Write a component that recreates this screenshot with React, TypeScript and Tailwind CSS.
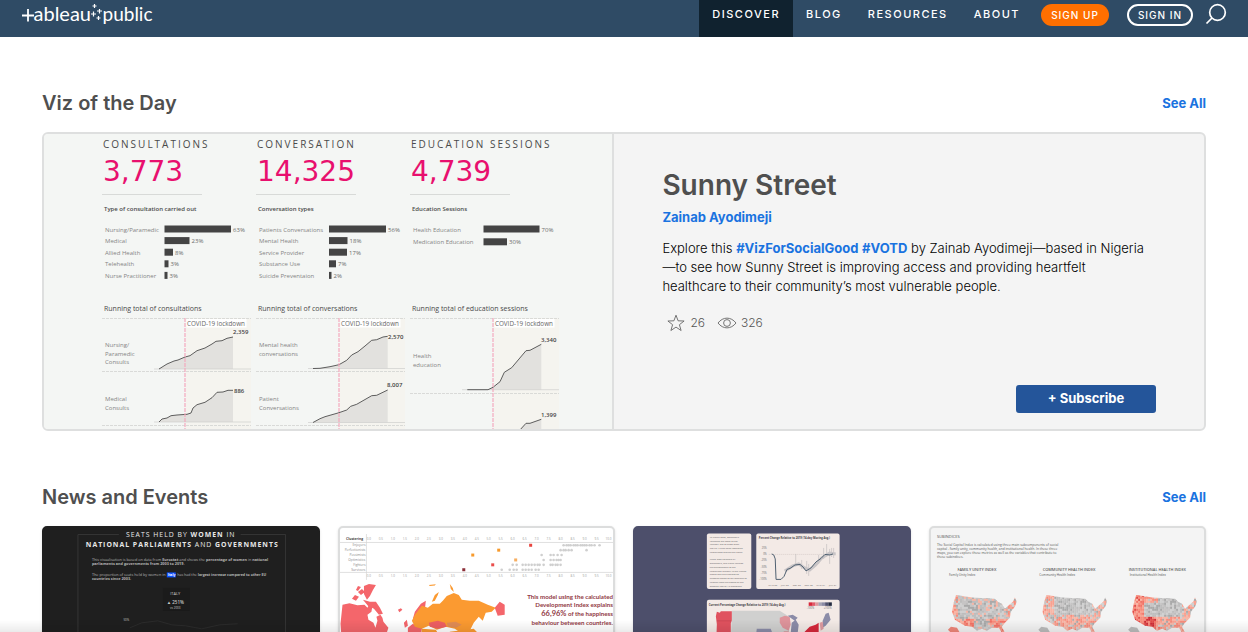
import { ReactNode } from "react";

type Point = [number, number];

interface IBar {
  label: string;
  percent: number;
  width: number;
}

interface IRunning {
  labels: string[];
  labelY: number;
  points: Point[];
  base: number;
  total: string;
  totalX: number;
  totalY: number;
}

interface IColumn {
  title: string;
  total: string;
  barsTitle: string;
  barX: number;
  barStep: number;
  bars: IBar[];
  runningTitle: string;
  separators: number[];
  running: IRunning[];
}

const columns: IColumn[] = [
  {
    title: "CONSULTATIONS",
    total: "3,773",
    barsTitle: "Type of consultation carried out",
    barX: 62.5,
    barStep: 11.6,
    bars: [
      { label: "Nursing/Paramedic", percent: 63, width: 66.5 },
      { label: "Medical", percent: 23, width: 25 },
      { label: "Allied Health", percent: 8, width: 8.5 },
      { label: "Telehealth", percent: 3, width: 4 },
      { label: "Nurse Practitioner", percent: 3, width: 3 },
    ],
    runningTitle: "Running total of consultations",
    separators: [4, 57, 111],
    running: [
      {
        labels: ["Nursing/", "Paramedic", "Consults"],
        labelY: 33,
        points: [[57, 55], [65, 50], [72, 47], [76, 46], [83, 43], [88, 41.7], [95, 36.7], [103, 34], [110, 30], [114, 27.3], [120, 26.7], [125, 24.3], [131, 23]],
        base: 55,
        total: "2,359",
        totalX: 131,
        totalY: 20,
      },
      {
        labels: ["Medical", "Consults"],
        labelY: 87,
        points: [[57, 108], [60, 105], [65, 104], [69, 101.7], [75, 101], [85, 100.3], [89, 99], [91, 94], [95, 90.7], [103, 88.3], [110, 83.7], [115, 78.3], [121, 78], [126, 76.3], [131, 76.3]],
        base: 108,
        total: "886",
        totalX: 132,
        totalY: 79,
      },
    ],
  },
  {
    title: "CONVERSATION",
    total: "14,325",
    barsTitle: "Conversation types",
    barX: 73,
    barStep: 11.6,
    bars: [
      { label: "Patients Conversations", percent: 56, width: 57 },
      { label: "Mental Health", percent: 18, width: 18.5 },
      { label: "Service Provider", percent: 17, width: 18 },
      { label: "Substance Use", percent: 7, width: 7 },
      { label: "Suicide Preventaion", percent: 2, width: 2.5 },
    ],
    runningTitle: "Running total of conversations",
    separators: [4, 57, 111],
    running: [
      {
        labels: ["Mental health", "conversations"],
        labelY: 33,
        points: [[57, 54.5], [64, 54.3], [74, 52.7], [83, 50.7], [90.7, 46.3], [95.7, 41], [102, 37.7], [109, 32], [115.7, 26.3], [120.7, 25.7], [127, 23], [131.7, 22.3]],
        base: 54.5,
        total: "2,570",
        totalX: 132,
        totalY: 25,
      },
      {
        labels: ["Patient", "Conversations"],
        labelY: 87,
        points: [[57, 108.5], [64, 104.7], [69, 102.7], [83, 98.7], [90.7, 96], [94.7, 92.3], [100.7, 90.3], [115.7, 81.7], [120.7, 81.3], [131.7, 76]],
        base: 108.5,
        total: "8,007",
        totalX: 131,
        totalY: 73,
      },
    ],
  },
  {
    title: "EDUCATION SESSIONS",
    total: "4,739",
    barsTitle: "Education Sessions",
    barX: 73.5,
    barStep: 12.8,
    bars: [
      { label: "Health Education", percent: 70, width: 56 },
      { label: "Medication Education", percent: 30, width: 23.5 },
    ],
    runningTitle: "Running total of education sessions",
    separators: [4, 79],
    running: [
      {
        labels: ["Health", "education"],
        labelY: 44,
        points: [[57.3, 75.7], [78, 75.7], [83, 73.3], [90, 67.7], [94.3, 58.3], [101.7, 53.7], [116, 36.7], [120, 36.3], [131.3, 30.3]],
        base: 75.7,
        total: "3,340",
        totalX: 131,
        totalY: 28,
      },
      {
        labels: ["Medication"],
        labelY: 119,
        points: [[109, 117], [116, 109.3], [120, 109.3], [131.3, 105.3]],
        base: 151,
        total: "1,399",
        totalX: 131,
        totalY: 103,
      },
    ],
  },
];

function Logo() {
  return (
    <svg width="134" height="30" viewBox="0 0 134 30" role="img" aria-label="tableau public" className="shrink-0">
      <g stroke="#fff" fill="none">
        <path d="M0 15.500h12M6 9v12.500" strokeWidth="1.800" />
        <path d="M70.500 6h4M72.500 4v4M75 11h5M77.500 9v4.500M69 14h5M71.500 11.500v5M74.500 18h4M76.500 16v4" strokeWidth="1.200" />
      </g>
      <g fill="#fff" fontFamily="Lato, sans-serif">
        <text x="11.500" y="21" fontSize="20">ableau</text>
        <text x="80.500" y="21" fontSize="19">public</text>
      </g>
    </svg>
  );
}

function NavLink({ children, active }: { children: ReactNode; active?: boolean }) {
  return (
    <a
      href="#"
      className={
        active
          ? "h-full bg-[#10222f] px-[13px] pt-[6px] leading-4"
          : "h-full px-[13px] pt-[6px] leading-4"
      }
    >
      {children}
    </a>
  );
}

function Header() {
  return (
    <header className="flex h-[37px] justify-between bg-[#2f4b65] pr-[21px] pl-[22px] text-white">
      <a href="#">
        <Logo />
      </a>
      <div className="flex">
        <nav className="flex text-[11px] font-medium tracking-[1.5px]">
          <NavLink active>DISCOVER</NavLink>
          <NavLink>BLOG</NavLink>
          <NavLink>RESOURCES</NavLink>
          <NavLink>ABOUT</NavLink>
        </nav>
        <div className="ml-2 flex items-start gap-[18px] pt-1 text-[10px] font-medium tracking-[1px]">
          <button type="button" className="h-[22px] w-[68px] rounded-full bg-[#ff6f00]">
            SIGN UP
          </button>
          <button type="button" className="h-[22px] w-[66px] rounded-full border-2 border-white">
            SIGN IN
          </button>
        </div>
        <button type="button" aria-label="Search" className="ml-3 h-7">
          <svg width="22" height="22" viewBox="0 0 22 22" fill="none" stroke="#fff" strokeWidth="1.700">
            <circle cx="12.500" cy="9.500" r="7.800" />
            <path d="M7 15l-5.500 5.500" />
          </svg>
        </button>
      </div>
    </header>
  );
}

function SectionHeading({ title }: { title: string }) {
  return (
    <div className="mb-[15px] flex items-center justify-between pt-[52px]">
      <h2 className="text-xl leading-7 font-semibold text-[#4f4f4f]">{title}</h2>
      <a href="#" className="pt-px text-[13px] font-bold text-[#1a73e0]">
        See All
      </a>
    </div>
  );
}

function BarChart({ column }: { column: IColumn }) {
  return (
    <svg width="154" height="80" viewBox="0 0 154 80" className="mt-1 block" fontSize="6">
      {column.bars.map((bar, i) => {
        const y = 11 + i * column.barStep;
        return (
          <g key={bar.label}>
            <text x="3" y={y + 2.5} fill="#858585">
              {bar.label}
            </text>
            <rect x={column.barX} y={y - 3.5} width={bar.width} height="7" fill="#444" />
            <text x={column.barX + bar.width + 2} y={y + 2.5} fill="#6b6b6b">
              {bar.percent}%
            </text>
          </g>
        );
      })}
    </svg>
  );
}

function RunningChart({ column }: { column: IColumn }) {
  return (
    <svg width="154" height="118" viewBox="0 0 154 118" className="block" fontSize="6">
      <rect x="84" y="4" width="65" height="114" fill="#f5f4ef" />
      {column.separators.map((y) => (
        <path key={y} d={`M0 ${y}.5H149`} stroke="#d2d3d1" strokeWidth="0.8" strokeDasharray="3 1" />
      ))}
      {column.running.map((item) => {
        const line = item.points.map((p) => p.join(" ")).join("L");
        return (
          <g key={item.total}>
            <path d={`M${line}V${item.base}H${item.points[0][0]}Z`} fill="#e2e1de" />
            <path d={`M52 ${item.base}H149`} stroke="#cfcfcd" strokeWidth="0.7" />
            <path d={`M${line}`} fill="none" stroke="#4d4d4d" strokeWidth="0.9" />
            <text x={item.totalX} y={item.totalY} fill="#3f3f3f" fontWeight="600">
              {item.total}
            </text>
            {item.labels.map((label, i) => (
              <text key={label} x="3" y={item.labelY + i * 8.7} fill="#858585">
                {label}
              </text>
            ))}
          </g>
        );
      })}
      <path d="M83 4v114" stroke="#f3a9bd" strokeWidth="1.200" strokeDasharray="4 1" />
      <rect x="84.500" y="5" width="60" height="8.500" fill="#fff" />
      <text x="85" y="11.500" fill="#666" fontSize="6.300">
        COVID-19 lockdown
      </text>
    </svg>
  );
}

function FeaturedViz() {
  return (
    <div className="grid h-[295px] grid-cols-[154px_154px_154px] overflow-hidden bg-[#f4f6f4] pl-[58px] font-['Open_Sans',sans-serif]">
      {columns.map((column) => (
        <div key={column.title} className="text-[#4a4a4a]">
          <h4 className="mt-1 pl-px text-[10px] leading-3 font-medium tracking-[2px] whitespace-nowrap">
            {column.title}
          </h4>
          <p className="mt-[6px] pl-px font-['DejaVu_Sans',sans-serif] text-[28px] leading-8 text-[#e8106e]">
            {column.total}
          </p>
          <div className="mt-[6px] h-px w-[100px] bg-[#d8dad8]" />
          <p className="mt-[9px] pl-[2px] text-[6px] leading-[10px] font-semibold">{column.barsTitle}</p>
          <BarChart column={column} />
          <p className="mt-[6px] pl-[2px] text-[7px] leading-[10px] font-medium">{column.runningTitle}</p>
          <RunningChart column={column} />
        </div>
      ))}
    </div>
  );
}

function VizOfTheDay() {
  return (
    <article className="flex overflow-hidden rounded-md border-2 border-[#dedfdf] bg-[#f4f4f4]">
      <div className="w-[49%]">
        <FeaturedViz />
      </div>
      <div className="flex w-[51%] flex-col border-l-2 border-[#dedfdf] px-12 pt-[35px] pb-4">
        <h3 className="text-[28px] leading-8 font-semibold text-[#4f4f4f]">Sunny Street</h3>
        <a href="#" className="mt-[6px] self-start text-[13px] leading-5 font-bold text-[#1a73e0]">
          Zainab Ayodimeji
        </a>
        <p className="mt-3 text-[13px] leading-[19px] font-light text-black">
          Explore this{" "}
          <a href="#" className="font-bold text-[#1a73e0]">
            #VizForSocialGood
          </a>{" "}
          <a href="#" className="font-bold text-[#1a73e0]">
            #VOTD
          </a>{" "}
          by Zainab Ayodimeji—based in Nigeria
          <br />
          —to see how Sunny Street is improving access and providing heartfelt
          <br />
          healthcare to their community’s most vulnerable people.
        </p>
        <div className="mt-[17px] flex items-center pl-1 text-xs leading-5 font-light text-[#555]">
          <svg width="20" height="18" viewBox="0 0 20 18" fill="none" stroke="#666" strokeWidth="0.9">
            <path d="M10 1.200l2.100 5.600 6 .2-4.700 3.700 1.700 5.800L10 13.100l-5.100 3.400 1.700-5.800L1.900 7l6-.2z" />
          </svg>
          <span className="ml-1">26</span>
          <svg width="20" height="12" viewBox="0 0 20 12" fill="none" stroke="#666" strokeWidth="0.9" className="ml-3">
            <path d="M1 6c5-6.500 13-6.500 18 0-5 6.500-13 6.500-18 0z" />
            <circle cx="10" cy="6" r="3.400" />
          </svg>
          <span className="ml-1">326</span>
        </div>
        <button
          type="button"
          className="mt-auto h-7 w-[140px] self-end rounded-[3px] bg-[#24559a] text-[13px] font-bold text-white"
        >
          + Subscribe
        </button>
      </div>
    </article>
  );
}

function Thumb({ children, border, title }: { children: ReactNode; border: string; title: string }) {
  return (
    <a href="#" aria-label={title} className={`block overflow-hidden rounded-[5px] border-2 shadow ${border}`}>
      <svg
        viewBox="2 2 274 176"
        preserveAspectRatio="xMidYMin slice"
        className="block w-full"
        fontFamily="'Open Sans', sans-serif"
      >
        {children}
      </svg>
    </a>
  );
}

function ParliamentsThumb() {
  return (
    <Thumb title="Seats held by women" border="border-[#1f1f1f] bg-[#1f1f1f]">
      <path d="M77 8.500H36V180M199 8.500H244V180" fill="none" stroke="#3b3b3b" strokeWidth="0.800" />
      <g fill="#e8e8e8" textAnchor="middle" fontSize="6.900" letterSpacing="1">
        <text x="139" y="11">
          SEATS HELD BY <tspan fontWeight="700">WOMEN</tspan> IN
        </text>
        <text x="140.500" y="21.500">
          <tspan fontWeight="700">NATIONAL PARLIAMENTS</tspan> AND <tspan fontWeight="700">GOVERNMENTS</tspan>
        </text>
      </g>
      <rect x="125" y="46.500" width="9" height="5" fill="#0b50ff" />
      <g fill="#b5b5b5" fontSize="3.800">
        <text x="50" y="34.600">
          This visualisation is based on data from <tspan fontWeight="700">Eurostat</tspan> and shows the{" "}
          <tspan fontWeight="700">percentage of women</tspan> in <tspan fontWeight="700">national</tspan>
        </text>
        <text x="50" y="39.200" fontWeight="700">
          parliaments and governments from 2003 to 2019.
        </text>
        <text x="50" y="50">The proportion of seats held by women in</text>
        <text x="126" y="50" fill="#fff" fontWeight="700" fontSize="3.400">
          Italy
        </text>
        <text x="135.500" y="50" fontSize="3.600">
          has had the <tspan fontWeight="700">largest increase compared to other EU</tspan>
        </text>
        <text x="50" y="54.400" fontWeight="700">
          countries since 2003.
        </text>
      </g>
      <rect x="121" y="62" width="27" height="23" fill="#1b1b1b" />
      <g fill="#c8c8c8" textAnchor="middle">
        <text x="133.500" y="69" fontSize="4">ITALY</text>
        <text x="133.500" y="77.700" fontSize="4.500" fontWeight="600">▲ 251%</text>
        <text x="133.500" y="83" fontSize="3">vs 2003</text>
        <text x="84.500" y="95.500" fontSize="3">50%</text>
      </g>
      <path d="M88 102l12-5 16-2 14 4 14 1 16 3 18-4 18-1" fill="none" stroke="#343434" strokeWidth="0.600" />
    </Thumb>
  );
}

const clusters = [
  { name: "Enjoyers", x: 193, color: "#e8453f", dots: [226, 229, 231, 233, 236, 238, 240, 243, 245, 247, 249, 252, 254, 257, 262] },
  { name: "Perfectionists", x: 161, color: "#f79a2c", dots: [223, 226, 228, 231, 234, 249] },
  { name: "Pessimists", x: 135, color: "#f79a2c", dots: [204, 213, 216, 220, 224] },
  { name: "Optimistics", x: 178, color: "#f7ae61", dots: [206, 213, 216, 219, 221, 223] },
  { name: "Fighters", x: 155, color: "#ea4e4c", dots: [175, 179, 185, 188, 191, 194, 197, 200, 202, 206, 213, 215, 218, 220, 223] },
  { name: "Survivors", x: 126, color: "#8c2f39", dots: [164, 172, 176, 179, 185, 188, 191, 194, 198, 201] },
];

const ticks = Array.from({ length: 21 }, (_, i) => i);

function HappinessThumb() {
  return (
    <Thumb title="Happiness of countries" border="border-[#dcdddd] bg-white">
      <path d="M2 16.500H276M2 46.500H276M28.500 8V54" stroke="#d4d4d4" strokeWidth="0.700" />
      <text x="8" y="14.200" fontSize="3.400" fontWeight="700" fill="#444">
        Clustering
      </text>
      <g fill="#999" fontSize="3" textAnchor="middle">
        {ticks.map((i) => (
          <g key={i}>
            <text x={31 + 12 * i} y="14.300">{(i / 2).toFixed(1)}</text>
            <text x={31 + 12 * i} y="51">{(i / 2).toFixed(1)}</text>
          </g>
        ))}
      </g>
      {clusters.map((row, i) => {
        const y = 19.3 + i * 4.9;
        return (
          <g key={row.name}>
            <text x="27.500" y={y + 1.2} fontSize="3.300" fill="#888" textAnchor="end">
              {row.name}
            </text>
            <rect x={row.x - 1.5} y={y - 1.5} width="3" height="3" fill={row.color} />
            {row.dots.map((dot) => (
              <circle key={dot} cx={dot} cy={y} r="1.300" fill="#cfcfcf" />
            ))}
          </g>
        );
      })}
      {/* world map */}
      <g fill="#f4666b">
        <path d="M4.500 79l7-1.500 8 2 7-.5 3 3 2-4 3 2-1 6-4 3 1 5 5 3 2 5 2-7-1-4 4-2 2 3 1 4 5 6-2 6-8 3-4 5-6 4-3 9-7 8-8-3-5-9-4-13-1-14z" />
        <path d="M14 73l3-4 4 2-3 4zM20 66l4-3 3 3-4 3zM26 60l5-2 7 1-3 5-3 6-3 4-3-6zM25 74l7 2 6 0 4 6 3 6-4 1-5-6-6-3zM18 64l2-4 3 1-3 4zM60 84l3-1.500 1.500 1.500-3 2.500z" />
        <path d="M70 102l5-4 5 3 5-2-2 9-13 0zM75 93l2-7 6-8 5-3-1 9-3 7-5 2zM66 97l3-3 1 6-3 2zM157 82l5-6 5 3v10l-7 1z" />
      </g>
      <g fill="#fb9a31">
        <path d="M84 80l6 2 5-4 7 0 3-3 4-5 7-3 5 2 3 5 8 1 9 0 9 4 8 3-4 4-6 1-3 8-4-4-5 6-4 8-9 2-6-4-9-2-9 3-8-4-7 3-7-2-3-6 3-6z" />
        <path d="M94 76l3-7 4-3-1 3-3 6zM91 59l7-.6-1 1.300-5 .3zM112 58l3 4 1 4-3-3zM84 103l14 1 5 8-13 6-7-6zM112 106l24-3 6 6-12 10-18-6z" />
      </g>
      <path d="M91 97l9-2 7 2 2 4-9 2-8-2z" fill="#ee5f63" />
      <path d="M109 97l9-1 6 3-6 3-8-1z" fill="#e08c55" />
      <g fill="#913a45" fontFamily="Lato, sans-serif" fontSize="6.200" fontWeight="700" textAnchor="end">
        <text x="275.500" y="73">This model using the calculated</text>
        <text x="275.500" y="81.500">Development Index explains</text>
        <text x="275.500" y="90.300">
          <tspan fontSize="7.500">66,96%</tspan> of the happiness
        </text>
        <text x="275.500" y="99">behaviour between countries.</text>
      </g>
    </Thumb>
  );
}

const restaurantText = [
  "In March 2020, OpenTable",
  "launched the State of the",
  "Industry site to show what",
  "COVID-19 has been impacting",
  "restaurants around the globe.",
  "",
  "Using data collected by",
  "OpenTable, this visual reviews",
  "the performance of the",
  "restaurant industry in the United",
  "States and the trajectories",
  "between states as we continue to",
  "recover from the effects of the",
  "ongoing COVID-19 pandemic.",
];

const legend = ["#d6283b", "#e05a68", "#dd9aa0", "#a4a3b4", "#8a8ba5", "#50536f", "#232b40"];

function RestaurantsThumb() {
  return (
    <Thumb title="Restaurant industry" border="border-[#4d4f6b] bg-[#4d4f6b]">
      <g fill="#f3eae6">
        <rect x="74" y="7.500" width="44.500" height="55.500" rx="2" />
        <rect x="123.500" y="7.500" width="83.500" height="55.500" rx="2" />
        <rect x="74" y="74" width="133" height="110" rx="2" />
      </g>
      <g fill="#5d5d64" fontSize="2.400">
        {restaurantText.map((line, i) => (
          <text key={i} x="77" y={12 + i * 3.75}>
            {line}
          </text>
        ))}
      </g>
      <g fill="#3d3d46" fontWeight="700" fontSize="2.700">
        <text x="126" y="13.500">Percent Change Relative to 2019 (14-day Moving Avg.)</text>
        <text x="76" y="80">Current Percentage Change Relative to 2019 (14-day Avg.)</text>
      </g>
      <path d="M136 28.500H203" stroke="#cfc6c3" strokeWidth="0.700" strokeDasharray="1 1" />
      <g fill="#666" fontSize="2.600" textAnchor="end">
        {["25%", "0%", "-25%", "-50%", "-75%", "-100%"].map((label, i) => (
          <text key={label} x="134" y={23 + i * 6.2}>
            {label}
          </text>
        ))}
      </g>
      <g fill="#666" fontSize="2.500" textAnchor="middle">
        {["MAR 20", "JUN 20", "SEP 20", "DEC 20", "MAR 21", "JUN 21"].map((label, i) => (
          <text key={label} x={140 + i * 12} y="60">
            {label}
          </text>
        ))}
      </g>
      <path d="M163 38v-10M169 43v-9M174 48v-13M176 50v-12M186 38v-9M191 33v-11M194 31v-13M197 38v-15M199 31v-9M201 32v-10" stroke="#c4bebf" strokeWidth="0.700" />
      <path d="M152 45l8-5 6-2 6 4 5 2 6-5 6-7 8-5 6 1" fill="none" stroke="#c8c4c6" strokeWidth="3" />
      <path d="M139 28l2 1 1.500 4 .8 20.500h5l3-3 3-7 3-1 5-3.500 5-.5 3 2.500 3 4 5-3 5-6 5-3.500 4-4 5 .5 3-1" fill="none" stroke="#4f6070" strokeWidth="1" />
      {legend.map((color, i) => (
        <rect key={color} x={176 + i * 3.3} y="76.500" width="3.400" height="3.500" fill={color} />
      ))}
      <g fill="#666" fontSize="2.600">
        <text x="174" y="83.500">-100%</text>
        <text x="191" y="83.500">+100%</text>
      </g>
      <path d="M99 85h48l8 5 2 20-8 70H96z" fill="#d0d0cf" />
      <path d="M84 86l3 1 1-1.500h11v9l-1 3v30l-15-1 1-28-1-8z" fill="#e0525f" />
      <path d="M84 95h14.500" stroke="#b9404e" strokeWidth="0.500" />
      <path d="M147 92l5-2 5 1 1 8-2 6-6-3-3-5z" fill="#de949b" />
      <path d="M155 90l5-1 5 3-3 3zM159 97l4-3 3 5-1 8h-7zM124 103h14l3 8h-18zM190 95l3-7 3-1 2 7-5 6-3 2z" fill="#8b8ca8" />
      <path d="M172 106l5-5 6-2 3-2v14h-14zM151 106h5v6h-5z" fill="#d6283b" />
      <path d="M187 97l3-1 1 7-3 2z" fill="#dd9aa0" />
    </Thumb>
  );
}

const usShape =
  "M4 0L20 2.700L43 4L46 7L50 9L53 14L61 7L63 2.700L65 7L63 12L59 17L58 23L53 28L50 32L53 38L50 38L47 33L40 33L35 36L30 34L25 36L20 32L13 31L3 25L0 17L2 7Z";

interface IIndex {
  title: string;
  caption: string;
  titleX: number;
  captionX: number;
  mapX: number;
  heat: (x: number, y: number) => number;
}

const indexes: IIndex[] = [
  {
    title: "FAMILY UNITY INDEX",
    caption: "Family Unity Index",
    titleX: 28.5,
    captionX: 20,
    mapX: 23,
    heat: (x, y) => (y > 22 && (x < 22 || x > 36) ? 0.65 : x < 6 || x > 52 ? 0.5 : 0.2),
  },
  {
    title: "COMMUNITY HEALTH INDEX",
    caption: "Community Health Index",
    titleX: 114,
    captionX: 110.5,
    mapX: 113.5,
    heat: (x, y) => (y > 18 || x < 11 ? 0.5 : x > 48 ? 0.35 : 0.05),
  },
  {
    title: "INSTITUTIONAL HEALTH INDEX",
    caption: "Institutional Health Index",
    titleX: 200,
    captionX: 201,
    mapX: 203.5,
    heat: (x, y) => (y > 21 && x < 24 ? 0.95 : x < 12 ? 0.75 : y > 20 || (x < 25 && y < 7) ? 0.52 : x > 48 ? 0.4 : 0.05),
  },
];

const greys = ["#bdbdbd", "#d0d0d0", "#a9a9a9", "#c6c4c4"];
const reds = ["#f8b5a5", "#f9a08f", "#f78b7a", "#f27266", "#e24a46", "#cf2c35"];

function noise(x: number, y: number) {
  const n = Math.sin(x * 12.9898 + y * 78.233) * 43758.5453;
  return n - Math.floor(n);
}

function cellColor(heat: number, x: number, y: number) {
  const value = noise(x, y);
  const mixed = heat + (value - 0.5) * 0.6;
  if (mixed < 0.38) return greys[Math.floor(value * 97) % greys.length];
  return reds[Math.min(reds.length - 1, Math.floor((mixed - 0.38) * 7))];
}

const cells = Array.from({ length: 33 * 19 }, (_, i) => ({ x: (i % 33) * 2, y: Math.floor(i / 33) * 2 }));

function SocialCapitalThumb() {
  return (
    <Thumb title="Social Capital Index" border="border-[#dcdddd] bg-[#f4f4f4]">
      <clipPath id="us">
        <path d={usShape} />
      </clipPath>
      <text x="8" y="12.500" fontSize="4" fill="#555">SUBINDICES</text>
      <g fontSize="3.300" fill="#555">
        <text x="8" y="20">The Social Capital Index is calculated using three main subcomponents of social</text>
        <text x="8" y="24">capital - family unity, community health, and institutional health. In these three</text>
        <text x="8" y="28">maps, you can explore these metrics as well as the variables that contribute to</text>
        <text x="8" y="32">these subindices.</text>
      </g>
      {indexes.map((item) => (
        <g key={item.title}>
          <text x={item.titleX} y="44.700" fontSize="3.900" fontWeight="600" fill="#555">
            {item.title}
          </text>
          <text x={item.captionX} y="50.500" fontSize="3.100" fill="#555">
            {item.caption}
          </text>
          <g transform={`translate(${item.mapX} 69)`}>
            <g clipPath="url(#us)">
              {cells.map((cell) => (
                <rect
                  key={`${cell.x}-${cell.y}`}
                  x={cell.x}
                  y={cell.y}
                  width="2.100"
                  height="2.100"
                  fill={cellColor(item.heat(cell.x, cell.y), cell.x, cell.y)}
                />
              ))}
            </g>
            <path d="M-4 35l3-3 6 1 3 5-7 2z" fill={item.mapX > 100 ? "#bcbcbc" : "#f0877a"} />
          </g>
        </g>
      ))}
    </Thumb>
  );
}

export default function App() {
  return (
    <div className="h-screen overflow-hidden bg-white font-[Inter,sans-serif]">
      <Header />
      <main className="px-[42px]">
        <section>
          <SectionHeading title="Viz of the Day" />
          <VizOfTheDay />
        </section>
        <section>
          <SectionHeading title="News and Events" />
          <div className="grid grid-cols-4 gap-[18px]">
            <ParliamentsThumb />
            <HappinessThumb />
            <RestaurantsThumb />
            <SocialCapitalThumb />
          </div>
        </section>
      </main>
      <div className="pointer-events-none fixed inset-x-0 bottom-0 h-3 bg-linear-to-b from-black/0 to-black/8" />
    </div>
  );
}
